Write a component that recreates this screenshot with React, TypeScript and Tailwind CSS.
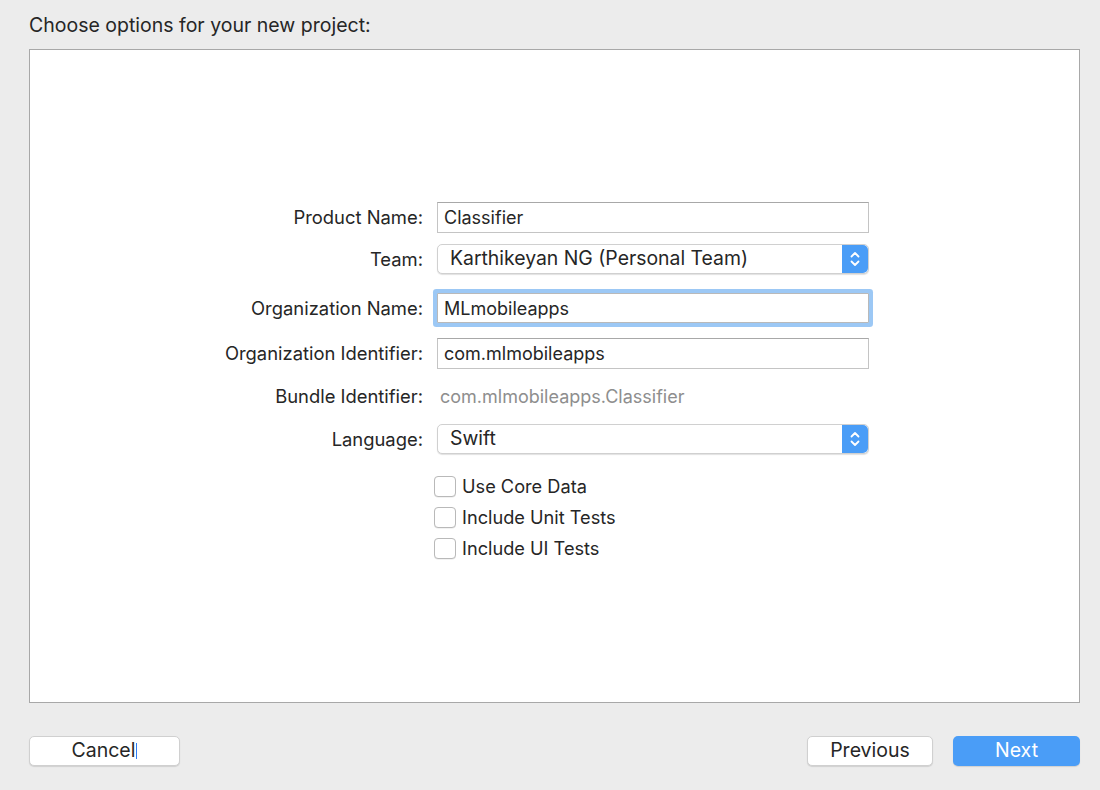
import React from "react";

const font = { fontFamily: "Inter, 'Noto Sans', 'Liberation Sans', sans-serif" };

function Stepper() {
  return (
    <div className="w-[26px] h-full bg-[#4a9df7] rounded-r-[5px] flex items-center justify-center">
      <svg width="12" height="20" viewBox="0 0 12 20" fill="none" stroke="white" strokeWidth="1.8" strokeLinecap="round" strokeLinejoin="round">
        <path d="M2.5 7.5 L6 4 L9.5 7.5" />
        <path d="M2.5 12.5 L6 16 L9.5 12.5" />
      </svg>
    </div>
  );
}

function Label({ children }: { children: React.ReactNode }) {
  return <div className="w-[393px] text-right text-[18.4px] text-[#262626] leading-none">{children}</div>;
}

function Checkbox({ label }: { label: string }) {
  return (
    <div className="flex items-center h-[22px]">
      <div className="ml-[404px] w-[22px] h-[21px] rounded-[4px] border border-[#b9b9b9] bg-white shadow-[0_0.5px_0.5px_rgba(0,0,0,0.1)]" />
      <span className="ml-[6px] text-[18.2px] text-[#262626] leading-none">{label}</span>
    </div>
  );
}

export default function App() {
  return (
    <div className="w-[1100px] h-[790px] bg-[#ececec] flex flex-col" style={font}>
      <div className="pl-[29px] pt-[14px] h-[49px] text-[19.5px] text-[#262626] leading-[22px]">
        Choose options for your new project:
      </div>
      <div className="ml-[29px] w-[1051px] h-[654px] bg-white border border-[#a8a8a8] flex flex-col pt-[152px]">
        <div className="flex items-center h-[31px]">
          <Label>Product Name:</Label>
          <div className="ml-[14px] w-[432px] h-full border border-[#c4c4c4] border-t-[#a8a8a8] bg-white flex items-center pl-[6px] text-[18px] text-[#262626]">
            Classifier
          </div>
        </div>
        <div className="flex items-center h-[30px] mt-[11px]">
          <Label>Team:</Label>
          <div className="ml-[14px] w-[432px] h-full rounded-[5px] bg-white border border-[#d0d0d0] shadow-[0_1px_1px_rgba(0,0,0,0.12)] flex items-center">
            <span className="flex-1 pl-[12px] text-[19.4px] text-[#262626]">Karthikeyan NG (Personal Team)</span>
            <Stepper />
          </div>
        </div>
        <div className="flex items-center h-[30px] mt-[19px]">
          <Label>Organization Name:</Label>
          <div className="ml-[14px] w-[432px] h-full border border-[#b9b9b9] bg-white flex items-center pl-[6px] text-[18px] text-[#262626] shadow-[0_0_0_4px_#9cc8f5] rounded-[1px]">
            MLmobileapps
          </div>
        </div>
        <div className="flex items-center h-[31px] mt-[15px]">
          <Label>Organization Identifier:</Label>
          <div className="ml-[14px] w-[432px] h-full border border-[#c4c4c4] border-t-[#a8a8a8] bg-white flex items-center pl-[6px] text-[18px] text-[#262626]">
            com.mlmobileapps
          </div>
        </div>
        <div className="flex items-center h-[32px] mt-[11px]">
          <Label>Bundle Identifier:</Label>
          <span className="ml-[17px] text-[18px] text-[#8e8e8e]">com.mlmobileapps.Classifier</span>
        </div>
        <div className="flex items-center h-[30px] mt-[12px]">
          <Label>Language:</Label>
          <div className="ml-[14px] w-[432px] h-full rounded-[5px] bg-white border border-[#d0d0d0] shadow-[0_1px_1px_rgba(0,0,0,0.12)] flex items-center">
            <span className="flex-1 pl-[12px] text-[19.4px] text-[#262626]">Swift</span>
            <Stepper />
          </div>
        </div>
        <div className="mt-[21px] flex flex-col gap-[9px]">
          <Checkbox label="Use Core Data" />
          <Checkbox label="Include Unit Tests" />
          <Checkbox label="Include UI Tests" />
        </div>
      </div>
      <div className="flex items-center mt-[33px] h-[30px] pl-[29px]">
        <button className="w-[151px] h-[30px] rounded-[5px] bg-white border border-[#d0d0d0] shadow-[0_1px_1px_rgba(0,0,0,0.12)] text-[19.5px] text-[#262626] flex items-center justify-center">
          Cancel<span className="inline-block w-[1px] h-[16px] bg-[#2f7df6] ml-[1px]" />
        </button>
        <div className="flex-1" />
        <button className="w-[126px] h-[30px] rounded-[5px] bg-white border border-[#d0d0d0] shadow-[0_1px_1px_rgba(0,0,0,0.12)] text-[19.5px] text-[#262626] flex items-center justify-center">
          Previous
        </button>
        <button className="ml-[20px] mr-[20px] w-[127px] h-[30px] rounded-[5px] bg-[#4a9df7] shadow-[0_1px_1px_rgba(0,0,0,0.12)] text-[19.5px] text-white flex items-center justify-center">
          Next
        </button>
      </div>
    </div>
  );
}
